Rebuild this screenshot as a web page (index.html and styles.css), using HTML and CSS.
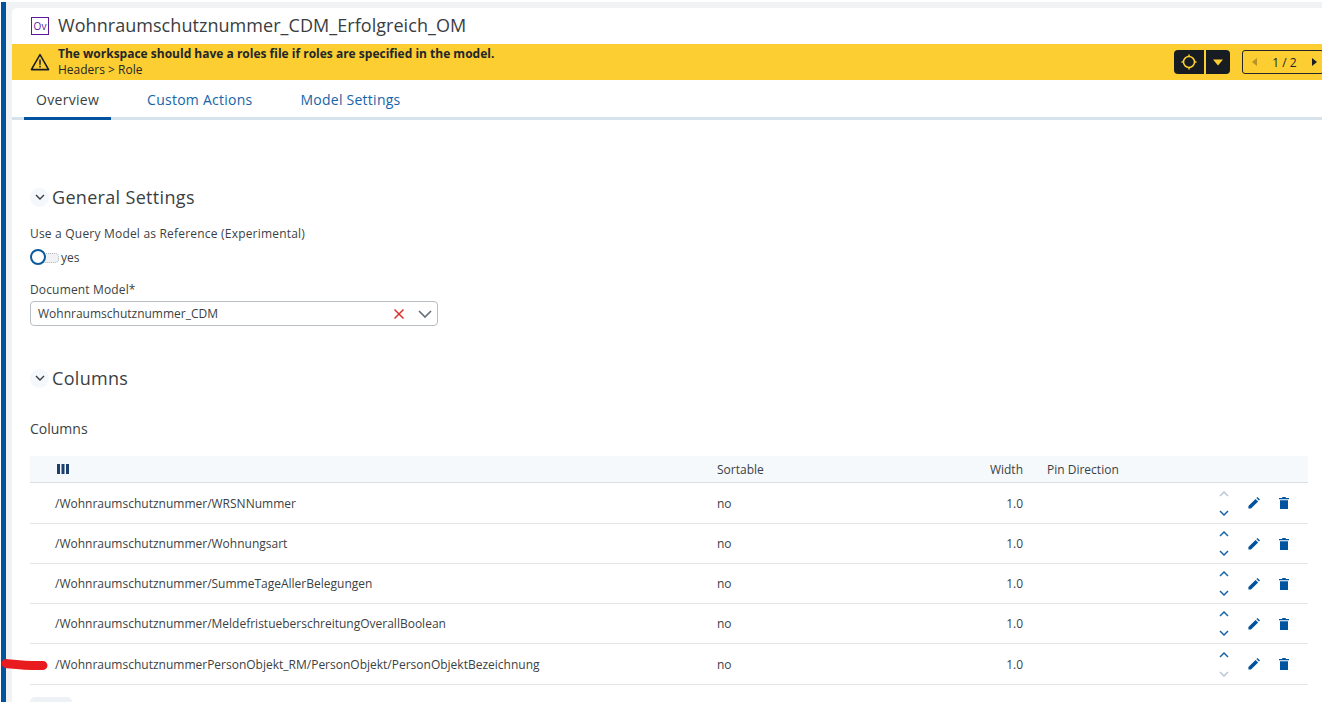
FILE: index.html
```html
<!DOCTYPE html>
<html lang="en">
<head>
<meta charset="utf-8">
<title>Wohnraumschutznummer_CDM_Erfolgreich_OM</title>
<link rel="stylesheet" href="styles.css">
</head>
<body>
<div class="shell">
  <main class="card">
    <header class="title-row">
      <span class="ov-icon">Ov</span>
      <h1 class="title">Wohnraumschutznummer_CDM_Erfolgreich_OM</h1>
    </header>
    <div class="banner">
      <svg class="warn" width="20" height="18" viewBox="0 0 20 18"><path d="M10 1.6 18.6 16.6H1.4Z" fill="none" stroke="#1b1f24" stroke-width="1.6" stroke-linejoin="round"/><path d="M10 6.500v5.200M10 12.800v1.600" stroke="#1b1f24" stroke-width="1.500"/></svg>
      <div class="banner-text">
        <div class="banner-strong">The workspace should have a roles file if roles are specified in the model.</div>
        <div class="banner-sub">Headers &gt; Role</div>
      </div>
      <div class="banner-actions">
        <div class="dark-btns">
          <span class="dark-btn wide"><svg width="18" height="18" viewBox="0 0 18 18"><circle cx="9" cy="9" r="5.500" fill="none" stroke="#fdce31" stroke-width="1.500"/><path d="M9 1.500v2M9 14.500v2M1.500 9h2M14.500 9h2" stroke="#fdce31" stroke-width="1.500"/></svg></span>
          <span class="dark-btn narrow"><svg width="12" height="7" viewBox="0 0 12 7"><path d="M1 0.500h10L6 6.500Z" fill="#fdce31"/></svg></span>
        </div>
        <div class="pager">
          <svg width="5" height="8" viewBox="0 0 5 8"><path d="M5 0v8L0 4Z" fill="#b59326"/></svg>
          <span class="pager-num">1 / 2</span>
          <svg width="5" height="8" viewBox="0 0 5 8"><path d="M0 0v8l5-4Z" fill="#1b1f24"/></svg>
        </div>
      </div>
    </div>
    <nav class="tabs">
      <a class="tab active">Overview</a>
      <a class="tab">Custom Actions</a>
      <a class="tab">Model Settings</a>
    </nav>
    <section class="content">
      <div class="section-head first">
        <span class="chev-round"><svg width="10" height="6" viewBox="0 0 10 6"><path d="M1 1l4 4 4-4" fill="none" stroke="#3a3f45" stroke-width="1.400"/></svg></span>
        <h2 class="section-title">General Settings</h2>
      </div>
      <div class="label ref-label">Use a Query Model as Reference (Experimental)</div>
      <div class="toggle-row">
        <span class="toggle"><span class="knob"></span></span>
        <span class="toggle-text">yes</span>
      </div>
      <div class="label doc-label">Document Model*</div>
      <div class="select">
        <span class="select-value">Wohnraumschutznummer_CDM</span>
        <svg class="select-x" width="12" height="12" viewBox="0 0 12 12"><path d="M1.500 1.500l9 9M10.500 1.500l-9 9" stroke="#d9302c" stroke-width="1.500"/></svg>
        <svg width="14" height="8" viewBox="0 0 14 8"><path d="M1 1l6 6 6-6" fill="none" stroke="#66707c" stroke-width="1.700"/></svg>
      </div>
      <div class="section-head second">
        <span class="chev-round"><svg width="10" height="6" viewBox="0 0 10 6"><path d="M1 1l4 4 4-4" fill="none" stroke="#3a3f45" stroke-width="1.400"/></svg></span>
        <h2 class="section-title">Columns</h2>
      </div>
      <div class="label columns-label">Columns</div>
      <div class="table">
        <div class="row head">
          <span class="c-path"><svg class="col-icon" width="12" height="10" viewBox="0 0 12 10"><path d="M0 0h3v10H0zM4.500 0h3v10h-3zM9 0h3v10H9z" fill="#1c3f6e"/></svg></span>
          <span class="c-sort">Sortable</span>
          <span class="c-width">Width</span>
          <span class="c-pin">Pin Direction</span>
          <span class="c-act"></span>
        </div>
        <div class="row">
          <span class="c-path">/Wohnraumschutznummer/WRSNNummer</span>
          <span class="c-sort">no</span><span class="c-width">1.0</span><span class="c-pin"></span>
          <span class="c-act">
            <span class="arrows"><svg class="up off" width="10" height="6" viewBox="0 0 10 6"><path d="M1 5l4-4 4 4" fill="none" stroke-width="1.500"/></svg><svg class="up" width="10" height="6" viewBox="0 0 10 6"><path d="M1 1l4 4 4-4" fill="none" stroke-width="1.500"/></svg></span>
            <svg class="pen" width="12" height="12" viewBox="0 0 14 14"><path d="M0.500 13.500V10.500L8.800 2.200 11.800 5.200 3.500 13.500ZM9.800 1.200 11 0 14 3 12.800 4.200Z"/></svg>
            <svg class="trash" width="10" height="12" viewBox="0 0 10 12"><path d="M3.500 0h3l.5 1h3v1.300H0V1h3ZM1 3.300h8V12H1Z"/></svg>
          </span>
        </div>
        <div class="row">
          <span class="c-path">/Wohnraumschutznummer/Wohnungsart</span>
          <span class="c-sort">no</span><span class="c-width">1.0</span><span class="c-pin"></span>
          <span class="c-act">
            <span class="arrows"><svg class="up" width="10" height="6" viewBox="0 0 10 6"><path d="M1 5l4-4 4 4" fill="none" stroke-width="1.500"/></svg><svg class="up" width="10" height="6" viewBox="0 0 10 6"><path d="M1 1l4 4 4-4" fill="none" stroke-width="1.500"/></svg></span>
            <svg class="pen" width="12" height="12" viewBox="0 0 14 14"><path d="M0.500 13.500V10.500L8.800 2.200 11.800 5.200 3.500 13.500ZM9.800 1.200 11 0 14 3 12.800 4.200Z"/></svg>
            <svg class="trash" width="10" height="12" viewBox="0 0 10 12"><path d="M3.500 0h3l.5 1h3v1.300H0V1h3ZM1 3.300h8V12H1Z"/></svg>
          </span>
        </div>
        <div class="row">
          <span class="c-path">/Wohnraumschutznummer/SummeTageAllerBelegungen</span>
          <span class="c-sort">no</span><span class="c-width">1.0</span><span class="c-pin"></span>
          <span class="c-act">
            <span class="arrows"><svg class="up" width="10" height="6" viewBox="0 0 10 6"><path d="M1 5l4-4 4 4" fill="none" stroke-width="1.500"/></svg><svg class="up" width="10" height="6" viewBox="0 0 10 6"><path d="M1 1l4 4 4-4" fill="none" stroke-width="1.500"/></svg></span>
            <svg class="pen" width="12" height="12" viewBox="0 0 14 14"><path d="M0.500 13.500V10.500L8.800 2.200 11.800 5.200 3.500 13.500ZM9.800 1.200 11 0 14 3 12.800 4.200Z"/></svg>
            <svg class="trash" width="10" height="12" viewBox="0 0 10 12"><path d="M3.500 0h3l.5 1h3v1.300H0V1h3ZM1 3.300h8V12H1Z"/></svg>
          </span>
        </div>
        <div class="row">
          <span class="c-path">/Wohnraumschutznummer/MeldefristueberschreitungOverallBoolean</span>
          <span class="c-sort">no</span><span class="c-width">1.0</span><span class="c-pin"></span>
          <span class="c-act">
            <span class="arrows"><svg class="up" width="10" height="6" viewBox="0 0 10 6"><path d="M1 5l4-4 4 4" fill="none" stroke-width="1.500"/></svg><svg class="up" width="10" height="6" viewBox="0 0 10 6"><path d="M1 1l4 4 4-4" fill="none" stroke-width="1.500"/></svg></span>
            <svg class="pen" width="12" height="12" viewBox="0 0 14 14"><path d="M0.500 13.500V10.500L8.800 2.200 11.800 5.200 3.500 13.500ZM9.800 1.200 11 0 14 3 12.800 4.200Z"/></svg>
            <svg class="trash" width="10" height="12" viewBox="0 0 10 12"><path d="M3.500 0h3l.5 1h3v1.300H0V1h3ZM1 3.300h8V12H1Z"/></svg>
          </span>
        </div>
        <div class="row">
          <span class="c-path">/WohnraumschutznummerPersonObjekt_RM/PersonObjekt/PersonObjektBezeichnung</span>
          <span class="c-sort">no</span><span class="c-width">1.0</span><span class="c-pin"></span>
          <span class="c-act">
            <span class="arrows"><svg class="up" width="10" height="6" viewBox="0 0 10 6"><path d="M1 5l4-4 4 4" fill="none" stroke-width="1.500"/></svg><svg class="up off" width="10" height="6" viewBox="0 0 10 6"><path d="M1 1l4 4 4-4" fill="none" stroke-width="1.500"/></svg></span>
            <svg class="pen" width="12" height="12" viewBox="0 0 14 14"><path d="M0.500 13.500V10.500L8.800 2.200 11.800 5.200 3.500 13.500ZM9.800 1.200 11 0 14 3 12.800 4.200Z"/></svg>
            <svg class="trash" width="10" height="12" viewBox="0 0 10 12"><path d="M3.500 0h3l.5 1h3v1.300H0V1h3ZM1 3.300h8V12H1Z"/></svg>
          </span>
        </div>
      </div>
      <div class="add-btn"></div>
    </section>
  </main>
</div>
<svg class="scribble" width="50" height="16" viewBox="0 0 50 16"><path d="M6 6.500C16 7.500 30 9 43 8.500" fill="none" stroke="#e81c1f" stroke-width="9" stroke-linecap="round"/></svg>
</body>
</html>
```
FILE: styles.css
```css
* { box-sizing: border-box; }
html, body { margin: 0; height: 100%; overflow: hidden; background: #fff; }
body { font-family: "Open Sans", "Noto Sans", sans-serif; color: #3b3f44; position: relative; }
.shell { margin: 2px 0 0 1px; width: 1321px; height: 702px; padding: 6px 0 0 6px; background: #f1f2f3; border-left: 5px solid #00539f; }
.card { background: #fff; height: 100%; border-top-left-radius: 5px; overflow: hidden; }
.title-row { height: 36px; display: flex; align-items: center; padding-left: 19px; gap: 9px; }
.ov-icon { width: 18px; height: 18px; border: 1px solid #5a189a; color: #5a189a; font-size: 10px; line-height: 16px; text-align: center; }
.title { margin: 0 0 2px; font-size: 18px; font-weight: 400; letter-spacing: .05px; color: #3a3d41; line-height: 24px; }
.banner { height: 36px; background: #fdce31; display: flex; align-items: center; padding-left: 18px; color: #23262a; }
.warn { margin-right: 8px; flex: none; }
.banner-text { font-size: 12px; line-height: 16px; flex: 1; }
.banner-strong { font-weight: 700; }
.banner-actions { display: flex; align-items: center; gap: 12px; margin-right: -2px; }
.dark-btns { display: flex; gap: 2px; }
.dark-btn { height: 24px; background: #171c22; display: flex; align-items: center; justify-content: center; }
.wide { width: 30px; border-radius: 4px 0 0 4px; }
.narrow { width: 24px; border-radius: 0 4px 4px 0; }
.pager { width: 82px; height: 24px; border: 1px solid #23262a; border-radius: 3px; display: flex; align-items: center; justify-content: space-between; padding: 0 6px 0 9px; font-size: 12px; }
.pager-num { color: #23262a; }
.tabs { height: 40px; display: flex; border-bottom: 3px solid #d6e2ec; padding-left: 12px; }
.tab { height: 40px; padding: 10px 12px 0; font-size: 14px; font-weight: 500; line-height: 20px; letter-spacing: .25px; color: #1565a8; margin-right: 24px; }
.tab.active { color: #3b3f44; border-bottom: 3px solid #00539f; font-weight: 400; letter-spacing: .3px; }
.content { padding-left: 18px; padding-right: 14px; }
.section-head { display: flex; align-items: center; gap: 3px; height: 24px; }
.section-head.first { margin-top: 65px; }
.section-head.second { margin-top: 40px; }
.chev-round { width: 19px; height: 19px; border-radius: 50%; background: #f4f8fc; display: flex; align-items: center; justify-content: center; }
.section-title { margin: 0; font-size: 18px; font-weight: 400; letter-spacing: .32px; color: #3b3f44; line-height: 24px; }
.label { font-size: 12px; line-height: 16px; color: #3b3f44; letter-spacing: .15px; }
.ref-label { margin-top: 17px; font-weight: 500; letter-spacing: .2px; }
.toggle-row { display: flex; align-items: center; height: 16px; margin-top: 7px; gap: 4px; font-size: 12px; }
.toggle { width: 27px; height: 16px; position: relative; display: block; }
.toggle::before { content: ""; position: absolute; left: 10px; top: 4px; width: 17px; height: 8px; border: 1px dotted #b4b8bc; background: #f1f2f3; border-radius: 0 4px 4px 0; }
.knob { position: absolute; left: 0; top: 0; width: 16px; height: 16px; border-radius: 50%; border: 2.500px solid #0a5a9e; background: #fff; }
.doc-label { margin-top: 17px; }
.select { width: 408px; height: 25px; margin-top: 3px; border: 1px solid #b9bec4; border-radius: 4px; display: flex; align-items: center; padding: 0 5px 0 7px; font-size: 12px; }
.select-value { flex: 1; }
.select-x { margin-right: 13px; }
.section-head.second + .columns-label { margin-top: 30px; font-size: 14px; line-height: 18px; letter-spacing: 0; }
.table { margin-top: 18px; width: 1278px; }
.row { display: grid; grid-template-columns: 687px 240px 66px 150px 135px; height: 40px; align-items: center; font-size: 12px; border-bottom: 1px solid #e3e5e8; color: #3b3f44; }
.row > span:first-child { padding-left: 25px; }
.row.head { height: 27px; background: #f5f9fc; font-weight: 500; border-bottom: 1px solid #dcdfe2; }
.row.head + .row { height: 41px; }
.row:last-child { height: 41px; }
.col-icon { display: block; margin-left: 2px; }
.c-width { text-align: right; }
.c-pin { padding-left: 24px; }
.c-act { display: flex; align-items: center; padding-left: 46px; }
.arrows { display: flex; flex-direction: column; gap: 13px; width: 10px; }
.up { stroke: #1565a8; display: block; }
.up.off { stroke: #b8c6d4; }
.pen { fill: #00539f; margin-left: 19px; }
.trash { fill: #00539f; margin-left: 19px; }
.add-btn { width: 42px; height: 20px; margin-top: 12px; background: #eef1f5; border-radius: 5px 5px 0 0; }
.scribble { position: absolute; left: 0; top: 657px; }
```
